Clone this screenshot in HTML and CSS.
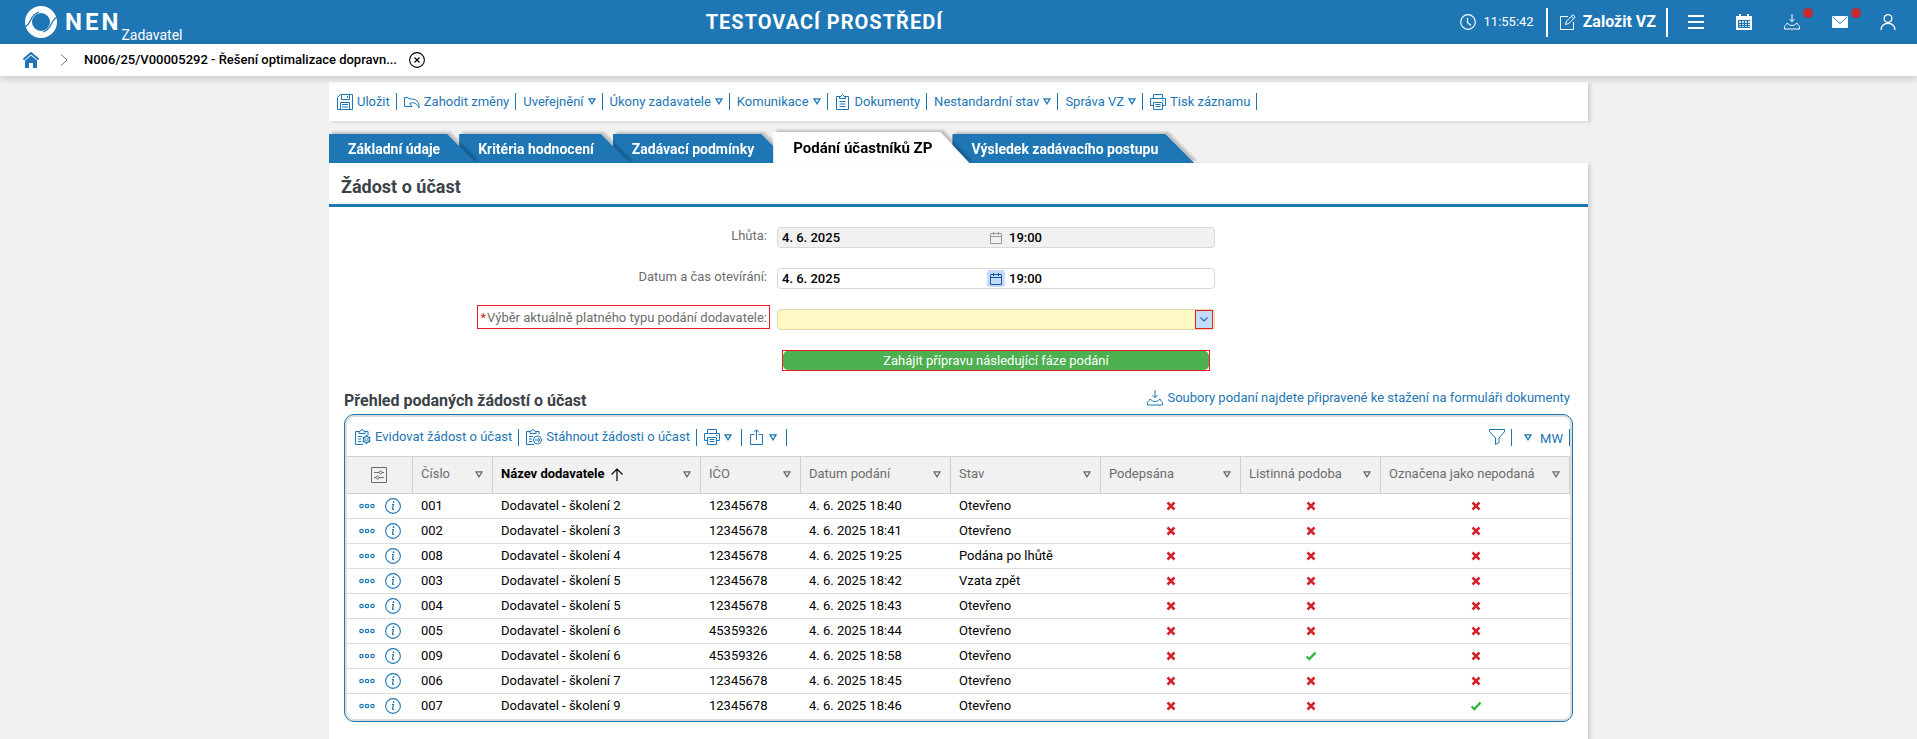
FILE: index.html
```html
<!DOCTYPE html>
<html lang="cs">
<head>
<meta charset="utf-8">
<meta name="viewport" content="width=device-width, initial-scale=1">
<title>NEN – Podání účastníků ZP</title>
<link rel="stylesheet" href="styles.css">
</head>
<body>
<svg class="sprite" aria-hidden="true">
  <symbol id="tri" viewBox="0 0 8 7"><path d="M1 .8h6L4 5.8z" fill="none" stroke="currentColor" stroke-width="1.3"/></symbol>
  <symbol id="print" viewBox="0 0 16 16"><path d="M3.5 4.500V.5h9v4M3.500 11.500h-3v-7h15v7h-3M3.500 8.500h9v7h-9zM5.500 10.500h5M5.500 12.500h5M12 6.500h1.500" fill="none" stroke="currentColor"/></symbol>
  <symbol id="download" viewBox="0 0 16 16"><path d="M8 0v7.500M5.500 5.200 8 7.700 10.500 5.200M4 9.500H2.500c0 2-2 2-2 3v2.500h15v-2.500c0-1-2-1-2-3H12M4 9.500c.5 2.600 7.500 2.600 8 0" fill="none" stroke="currentColor"/></symbol>
  <symbol id="calendar" viewBox="0 0 12 12"><path d="M.5 1.500h11v10H.5zM.5 4.500h11M3.500 0v3M8.500 0v3" fill="none" stroke="currentColor"/></symbol>
  <symbol id="clip" viewBox="0 0 16 16"><path d="M5 2.500H1.500v13h12v-13H10M4.500 4.500v-2H6Q7.500-1.500 9 2.500h1.500v2zM4.500 7.500h6M4.500 10h6M4.500 12.500h6" fill="none" stroke="currentColor"/></symbol>
  <symbol id="clip-gear" viewBox="0 0 16 16"><path d="M4 2.500H.5v13H8M10 2.500h3v4M4 4.500v-2h1Q7-1.500 9 2.500h1v2zM3 7.500h4M3 10h3M3 12.500h3" fill="none" stroke="currentColor"/><circle cx="11.500" cy="10.500" r="3" fill="none" stroke="currentColor" stroke-width="1.200"/><circle cx="11.500" cy="10.500" r="1.200" fill="none" stroke="currentColor" stroke-width=".8"/><path d="M11.500 6v1.500M11.500 13.500V15M7.700 8.200 9 9M14 12l1.300.8M15.300 8.200 14 9M9 12l-1.300.8" stroke="currentColor" stroke-width="1.600"/></symbol>
  <symbol id="clip-arrow" viewBox="0 0 16 16"><path d="M4 2.500H.5v13H8M10 2.500h3v3M4 4.500v-2h1Q7-1.500 9 2.500h1v2zM3 7.500h4M3 10h3M3 12.500h3M9 11h5M12 9l2 2-2 2" fill="none" stroke="currentColor"/><circle cx="11.500" cy="11" r="4" fill="none" stroke="currentColor"/></symbol>
  <symbol id="dots" viewBox="0 0 16 6"><g fill="none" stroke="currentColor" stroke-width="1.200"><circle cx="2.500" cy="3" r="1.700"/><circle cx="8" cy="3" r="1.700"/><circle cx="13.500" cy="3" r="1.700"/></g></symbol>
  <symbol id="info" viewBox="0 0 16 16"><circle cx="8" cy="8" r="7.400" fill="none" stroke="currentColor" stroke-width="1.100"/><path d="M7 6.500h1.300l-.8 4.200q0 1 1.500.4" fill="none" stroke="currentColor" stroke-width="1.200"/><circle cx="8.500" cy="4.200" r=".9" fill="currentColor"/></symbol>
  <symbol id="no" viewBox="0 0 10 10"><path d="m1.500 1.500 7 7m0-7-7 7" stroke="#d2232a" stroke-width="2.500"/></symbol>
  <symbol id="yes" viewBox="0 0 10 10"><path d="m.5 5.500 2.800 2.600L9.500 1.600" fill="none" stroke="#2eb83a" stroke-width="2.300"/></symbol>
</svg>

<header class="topbar">
  <a class="brand" href="#">
    <svg class="brand-mark" viewBox="0 0 32 32" aria-hidden="true">
      <circle cx="16" cy="16" r="12.500" fill="none" stroke="#fff" stroke-width="7"/>
      <path d="M-1 22C2 20 4.500 17 6 13.500 7.500 10 10 7.500 14 6M33 10c-3 2-5.500 5-7 8.500-1.500 3.500-4 6-8 7.500" fill="none" stroke="#1e76b4" stroke-width="1.300"/>
    </svg>
    <span class="brand-name">NEN</span><span class="brand-role">Zadavatel</span>
  </a>
  <strong class="env">TESTOVACÍ PROSTŘEDÍ</strong>
  <div class="top-actions">
    <span class="clock"><svg class="i16" viewBox="0 0 16 16" aria-hidden="true"><circle cx="8" cy="8" r="7.300" fill="none" stroke="currentColor" stroke-width="1.200"/><path d="M7.500 4v4.500l3.500 3" fill="none" stroke="currentColor" stroke-width="1.200"/></svg>11:55:42</span>
    <button class="create" type="button"><svg class="i16" viewBox="0 0 16 16" aria-hidden="true"><path d="M8 2.500H.5v13h13V8M5.500 10.500l1-3.500L13 .8l2.200 2.200L8.800 9.500zM11.500 2.200l2.200 2.300" fill="none" stroke="currentColor"/></svg>Založit VZ</button>
    <nav class="top-icons" aria-label="Nástroje">
      <button type="button" aria-label="Menu"><svg class="i16" viewBox="0 0 16 16"><path d="M0 2h16M0 8h16M0 14h16" stroke="currentColor" stroke-width="2"/></svg></button>
      <button type="button" aria-label="Kalendář"><svg class="i16" viewBox="0 0 16 16"><path d="M0 2h3V0h2v2h6V0h2v2h3v14H0zM2 6v8h12V6z" fill="currentColor" fill-rule="evenodd"/><path d="M3 7h2v2H3zm3 0h2v2H6zm3 0h2v2H9zm3 0h2v2h-2zM3 10h2v1H3zm3 0h2v1H6zm3 0h2v1H9zm3 0h2v1h-2zM3 12h2v1H3zm3 0h2v1H6zm3 0h2v1H9zm3 0h2v1h-2z" fill="currentColor" opacity=".75"/></svg></button>
      <button type="button" aria-label="Stahování"><svg class="i16"><use href="#download"/></svg><i class="badge"></i></button>
      <button type="button" aria-label="Zprávy"><svg class="i16" viewBox="0 0 16 16"><rect y="2" width="16" height="12" rx="1" fill="currentColor"/><path d="m1 3 7 6.500L15 3" fill="none" stroke="#1e76b4"/></svg><i class="badge"></i></button>
      <button type="button" aria-label="Uživatel"><svg class="i16" viewBox="0 0 16 16"><circle cx="8" cy="4.500" r="3.900" fill="none" stroke="currentColor" stroke-width="1.300"/><path d="M1 16c0-9 14-9 14 0" fill="none" stroke="currentColor" stroke-width="1.300"/></svg></button>
    </nav>
  </div>
</header>

<nav class="crumbs" aria-label="Navigace">
  <a href="#" aria-label="Domů"><svg class="i16" viewBox="0 0 16 16"><path d="M.5 7.500 8 1l7.500 6.500" fill="none" stroke="#1e76b4" stroke-width="2"/><path d="M2 8.500 8 3.500l6 5V16h-4v-5H6v5H2z" fill="#1e76b4"/></svg></a>
  <svg class="crumb-sep" viewBox="0 0 8 12" aria-hidden="true"><path d="m1 .5 6 5.500-6 5.500" fill="none" stroke="#777"/></svg>
  <a class="crumb-title" href="#">N006/25/V00005292 - Řešení optimalizace dopravn...</a>
  <button type="button" aria-label="Zavřít"><svg class="i16" viewBox="0 0 16 16"><circle cx="8" cy="8" r="7.400" fill="none" stroke="#000" stroke-width="1.100"/><path d="m5.500 5.500 5 5m0-5-5 5" stroke="#000" stroke-width="1.200"/></svg></button>
</nav>

<main class="page">
  <div class="toolbar card" role="toolbar" aria-label="Záznam">
    <button type="button"><svg class="i16" viewBox="0 0 16 16"><path d="M3.500.5h12v15H.5v-12zM4.500.5v5h8v-5M10.500 2v2M3.500 15.500v-7h9v7M5 10.500h6M5 13h6" fill="none" stroke="currentColor"/></svg>Uložit</button>
    <button type="button"><svg class="i16" viewBox="0 0 16 16"><path d="M6.500 5 4.500 4.500 4 3.500H.5v9h7.500L5.500 9.500c4-2 7.500 0 9.500 4.500.8-6-3-9.500-8.500-9z" fill="none" stroke="currentColor"/></svg>Zahodit změny</button>
    <button type="button">Uveřejnění<svg class="tri"><use href="#tri"/></svg></button>
    <button type="button">Úkony zadavatele<svg class="tri"><use href="#tri"/></svg></button>
    <button type="button">Komunikace<svg class="tri"><use href="#tri"/></svg></button>
    <button type="button"><svg class="i16"><use href="#clip"/></svg>Dokumenty</button>
    <button type="button">Nestandardní stav<svg class="tri"><use href="#tri"/></svg></button>
    <button type="button">Správa VZ<svg class="tri"><use href="#tri"/></svg></button>
    <button type="button"><svg class="i16"><use href="#print"/></svg>Tisk záznamu</button>
  </div>

  <nav class="tabs" aria-label="Záložky">
    <a class="tab" href="#"><span>Základní údaje</span></a>
    <a class="tab" href="#"><span>Kritéria hodnocení</span></a>
    <a class="tab" href="#"><span>Zadávací podmínky</span></a>
    <a class="tab active" href="#" aria-current="page"><span>Podání účastníků ZP</span></a>
    <a class="tab" href="#"><span>Výsledek zadávacího postupu</span></a>
  </nav>

  <section class="panel card">
    <h1>Žádost o účast</h1>
    <form class="form">
      <label for="deadline">Lhůta:</label>
      <div class="field datetime readonly">
        <input id="deadline" value="4. 6. 2025" readonly>
        <button type="button" aria-label="Kalendář" disabled><svg class="i12"><use href="#calendar"/></svg></button>
        <input aria-label="Lhůta, čas" value="19:00" readonly>
      </div>
      <label for="opening">Datum a čas otevírání:</label>
      <div class="field datetime">
        <input id="opening" value="4. 6. 2025">
        <button type="button" aria-label="Kalendář"><svg class="i12"><use href="#calendar"/></svg></button>
        <input aria-label="Čas otevírání" value="19:00">
      </div>
      <label class="marked" for="type"><b>*</b>Výběr aktuálně platného typu podání dodavatele:</label>
      <div class="field choice">
        <select id="type"><option></option></select>
        <span class="choice-arrow"><svg viewBox="0 0 8 5"><path d="m.5.5 3.500 3.500L7.500.5" fill="none" stroke="#1e6db8" stroke-width="1.200"/></svg></span>
      </div>
      <div class="submit-wrap"><button class="submit" type="button">Zahájit přípravu následující fáze podání</button></div>
    </form>

    <div class="list-head">
      <h2>Přehled podaných žádostí o účast</h2>
      <a href="#"><svg class="i16"><use href="#download"/></svg>Soubory podaní najdete připravené ke stažení na formuláři dokumenty</a>
    </div>

    <div class="grid-box">
      <div class="grid-tools">
        <button type="button"><svg class="i16"><use href="#clip-gear"/></svg>Evidovat žádost o účast</button>
        <button type="button"><svg class="i16"><use href="#clip-arrow"/></svg>Stáhnout žádosti o účast</button>
        <button class="compact" type="button" aria-label="Tisk"><svg class="i16"><use href="#print"/></svg><svg class="tri"><use href="#tri"/></svg></button>
        <button class="compact" type="button" aria-label="Export"><svg class="i16" viewBox="0 0 16 16"><path d="M5.500 5.500h-4v10h12v-10h-4M7.500 11V.8M5 3.300 7.500.8 10 3.300" fill="none" stroke="currentColor"/></svg><svg class="tri"><use href="#tri"/></svg></button>
        <button class="push" type="button" aria-label="Filtr"><svg class="i16" viewBox="0 0 16 16"><path d="M.5.5h15v2.200L10 9v4.500L6.500 15.500V9L.5 2.700z" fill="none" stroke="currentColor"/></svg></button>
        <button class="view" type="button"><svg class="tri"><use href="#tri"/></svg><span>MW</span></button>
      </div>
      <table>
        <colgroup><col class="w66"><col class="w80"><col class="w208"><col class="w100"><col class="w150"><col class="w150"><col class="w140"><col class="w140"><col></colgroup>
        <thead>
          <tr>
            <th class="settings"><button type="button" aria-label="Nastavení sloupců"><svg class="i16" viewBox="0 0 16 16"><path d="M.5.500h15v15H.5zM3 5.500h5M11 5.500h2M3 10.500h2M8 10.500h5" fill="none" stroke="currentColor"/><circle cx="9.500" cy="5.500" r="1.500" fill="none" stroke="currentColor"/><circle cx="6.500" cy="10.500" r="1.500" fill="none" stroke="currentColor"/></svg></button></th>
            <th><div>Číslo<svg class="tri"><use href="#tri"/></svg></div></th>
            <th class="sorted"><div>Název dodavatele<svg class="arrow" viewBox="0 0 12 13"><path d="M6 13V1M.5 6.500 6 1l5.500 5.500" fill="none" stroke="#000" stroke-width="1.200"/></svg><svg class="tri"><use href="#tri"/></svg></div></th>
            <th><div>IČO<svg class="tri"><use href="#tri"/></svg></div></th>
            <th><div>Datum podání<svg class="tri"><use href="#tri"/></svg></div></th>
            <th><div>Stav<svg class="tri"><use href="#tri"/></svg></div></th>
            <th><div>Podepsána<svg class="tri"><use href="#tri"/></svg></div></th>
            <th><div>Listinná podoba<svg class="tri"><use href="#tri"/></svg></div></th>
            <th><div>Označena jako nepodaná<svg class="tri"><use href="#tri"/></svg></div></th>
          </tr>
        </thead>
        <tbody id="rows"></tbody>
      </table>
    </div>
  </section>
</main>
<script src="rows.js"></script>
</body>
</html>
```
FILE: rows.js
```javascript
const submissions = [
  ["001", "Dodavatel - školení 2", "12345678", "4. 6. 2025 18:40", "Otevřeno", 0, 0, 0],
  ["002", "Dodavatel - školení 3", "12345678", "4. 6. 2025 18:41", "Otevřeno", 0, 0, 0],
  ["008", "Dodavatel - školení 4", "12345678", "4. 6. 2025 19:25", "Podána po lhůtě", 0, 0, 0],
  ["003", "Dodavatel - školení 5", "12345678", "4. 6. 2025 18:42", "Vzata zpět", 0, 0, 0],
  ["004", "Dodavatel - školení 5", "12345678", "4. 6. 2025 18:43", "Otevřeno", 0, 0, 0],
  ["005", "Dodavatel - školení 6", "45359326", "4. 6. 2025 18:44", "Otevřeno", 0, 0, 0],
  ["009", "Dodavatel - školení 6", "45359326", "4. 6. 2025 18:58", "Otevřeno", 0, 1, 0],
  ["006", "Dodavatel - školení 7", "12345678", "4. 6. 2025 18:45", "Otevřeno", 0, 0, 0],
  ["007", "Dodavatel - školení 9", "12345678", "4. 6. 2025 18:46", "Otevřeno", 0, 0, 1],
];

const actions =
  '<td><div class="row-actions">' +
  '<button type="button" aria-label="Akce"><svg class="dots"><use href="#dots"/></svg></button>' +
  '<button type="button" aria-label="Detail"><svg class="i16"><use href="#info"/></svg></button>' +
  "</div></td>";

const flag = (on) =>
  `<td class="flag"><svg role="img" aria-label="${on ? "Ano" : "Ne"}"><use href="#${on ? "yes" : "no"}"/></svg></td>`;

document.getElementById("rows").innerHTML = submissions
  .map((s) => "<tr>" + actions + s.slice(0, 5).map((v) => `<td>${v}</td>`).join("") + s.slice(5).map(flag).join("") + "</tr>")
  .join("");
```
FILE: styles.css
```css
:root {
  --blue: #1e76b4;
  --line: #dcdedd;
  --bg: #f1f1f1;
  --red: #ed1c24;
}
* { box-sizing: border-box; }
body {
  margin: 0;
  background: var(--bg);
  color: #000;
  font: 13px/16px Roboto, "Open Sans", sans-serif;
}
button, input, select { font: inherit; color: inherit; }
button { display: flex; align-items: center; border: 0; padding: 0; background: none; }
a { color: var(--blue); text-decoration: none; }
svg { display: block; flex: none; }
.sprite { position: absolute; width: 0; height: 0; }
.i16 { width: 16px; height: 16px; }
.i12 { width: 12px; height: 12px; }
.tri { width: 8px; height: 7px; }

.topbar {
  display: grid;
  grid-template-columns: 17fr auto 24fr;
  height: 44px;
  align-items: center;
  padding: 0 13px 0 25px;
  background: var(--blue);
  color: #fff;
}
.brand { display: flex; align-items: center; height: 44px; color: #fff; }
.brand-mark { width: 32px; height: 32px; }
.brand-name { margin-left: 8px; font-size: 24px; font-weight: 700; letter-spacing: 3px; }
.brand-role { align-self: flex-end; padding-bottom: 1px; font-size: 14px; }
.env { font-size: 20px; font-weight: 700; letter-spacing: 1px; }
.top-actions { display: flex; justify-content: flex-end; align-items: center; }
.clock { display: flex; align-items: center; gap: 8px; padding-right: 12px; }
.create { gap: 7px; height: 29px; padding: 0 10px 0 12px; border: solid #fff; border-width: 0 2px; font-size: 16px; font-weight: 700; }
.top-icons { display: flex; margin-left: 4px; margin-right: -8px; }
.top-icons button { position: relative; justify-content: center; width: 48px; height: 44px; }
.badge { position: absolute; top: 8px; right: 3px; width: 10px; height: 10px; border-radius: 50%; background: #c92a2d; }

.crumbs {
  position: relative;
  z-index: 10;
  display: flex;
  align-items: center;
  height: 32px;
  padding: 0 23px;
  background: #fff;
  box-shadow: 0 2px 8px rgba(0, 0, 0, .2);
}
.crumb-sep { width: 8px; height: 12px; margin: 0 16px 0 21px; }
.crumb-title { margin-right: 12px; color: #000; font-weight: 500; }

.page { max-width: 1259px; margin: 6px auto 0; }
.card { background: #fff; box-shadow: 3px 1px 3px rgba(0, 0, 0, .12); }
.toolbar { display: flex; align-items: center; height: 39px; padding-left: 1px; }
.toolbar button, .grid-tools button {
  gap: 4px;
  height: 17px;
  padding: 0 6px 0 7px;
  border-right: 1px solid var(--blue);
  color: var(--blue);
  white-space: nowrap;
}

.tabs { display: flex; align-items: flex-end; height: 42px; padding-top: 10px; }
.tab {
  position: relative;
  z-index: 5;
  height: 29px;
  padding: 0 19px;
  color: #fff;
  font-size: 14px;
  font-weight: 700;
  line-height: 31px;
  white-space: nowrap;
  filter: drop-shadow(3px -2px 1px rgba(0, 0, 0, .2));
}
.tab::before {
  content: "";
  position: absolute;
  inset: 0 -17px 0 0;
  background: var(--blue);
  clip-path: polygon(0 0, calc(100% - 29px) 0, 100% 100%, 0 100%);
}
.tab span { position: relative; }
.tab:nth-child(2) { z-index: 4; }
.tab:nth-child(3) { z-index: 3; }
.tab:nth-child(5) { z-index: 1; }
.tab.active { z-index: 6; height: 31px; padding: 0 20px; color: #000; font-size: 15px; line-height: 32px; }
.tab.active::before { background: #fff; }

.panel { position: relative; z-index: 7; padding-bottom: 24px; }
h1 { margin: 0; padding: 12px 12px 5px; border-bottom: 3px solid var(--blue); color: #3b4248; font-size: 18px; line-height: 24px; font-weight: 700; }

.form {
  display: grid;
  grid-template-columns: 441fr 438fr 373fr;
  grid-auto-rows: 21px;
  row-gap: 20px;
  padding-top: 20px;
  padding-left: 7px;
}
.form > label { grid-column: 1; justify-self: end; align-self: start; height: 24px; margin: -4px 7px 0 0; padding: 4px 2px 2px; border: 1px solid transparent; color: #6d6d6d; white-space: nowrap; }
.form > label.marked { border-color: var(--red); }
.form > label b { padding-right: 1px; color: #d2232a; font-weight: 400; }
.field { grid-column: 2; display: flex; align-items: center; border: 1px solid #d9d9d9; border-radius: 4px; background: #fff; }
.field input { flex: 1; width: 0; height: 19px; padding: 0 4px; border: 0; background: none; font-weight: 500; outline: 0; }
.datetime button { justify-content: center; width: 18px; height: 17px; border-radius: 3px; background: #c3dbf7; color: #1a56a5; }
.readonly { background: var(--bg); }
.readonly button { background: none; color: #999; }
.choice { position: relative; border-color: #dcd8b4; background: #fff8c5; }
.choice select { width: 100%; height: 19px; border: 0; background: none; appearance: none; outline: 0; }
.choice-arrow { position: absolute; top: 0; right: 1px; display: flex; align-items: center; justify-content: center; width: 18px; height: 19px; border: 1px solid var(--red); background: #c3dbf7; pointer-events: none; }
.choice-arrow svg { width: 8px; height: 5px; }
.submit-wrap { grid-column: 2; margin: 0 5px; border: 1px solid var(--red); }
.submit { width: 100%; height: 19px; justify-content: center; border-radius: 5px; background: #4caf50; color: #fff; }

.list-head { display: flex; justify-content: space-between; padding: 18px 18px 3px 15px; }
.list-head h2 { margin: 0; padding-top: 3px; color: #3b4248; font-size: 16px; line-height: 18px; font-weight: 700; height: 22px; }
.list-head a { display: flex; align-items: center; gap: 4px; height: 18px; }

.grid-box { margin: 0 15px; padding: 2px 2px 3px; border: 1px solid var(--blue); border-radius: 10px; background: #fff; box-shadow: inset 0 0 0 2px var(--line); overflow: hidden; }
.grid-tools { display: flex; align-items: center; height: 39px; padding: 1px 0 0 1px; }
.grid-tools .compact { padding-right: 9px; }
.grid-tools .push { margin-left: auto; }
.grid-tools .view { gap: 8px; padding-left: 12px; }
.view span { padding-top: 3px; }

table { width: 100%; border-collapse: separate; border-spacing: 0; table-layout: fixed; }
.w66 { width: 66px; }
.w80 { width: 80px; }
.w100 { width: 100px; }
.w140 { width: 140px; }
.w150 { width: 150px; }
.w208 { width: 208px; }
th { height: 38px; padding: 0 9px 0 8px; border: solid #d0d0d0; border-width: 1px 1px 1px 0; background: var(--bg); color: #6d6d6d; font-weight: 400; text-align: left; white-space: nowrap; }
th div { display: flex; align-items: center; height: 32px; padding-bottom: 2px; }
th .tri { margin-left: auto; }
th .arrow { width: 12px; height: 13px; margin-left: 6px; }
th.sorted { color: #000; font-weight: 700; }
th.sorted .tri { color: #6d6d6d; }
.settings button { margin: 0 auto; }
td { height: 25px; padding: 0 8px; border-bottom: 1px solid var(--line); white-space: nowrap; }
tbody tr:last-child td { height: 24px; border-bottom: 0; }
.row-actions { display: flex; align-items: center; gap: 10px; padding-left: 4px; }
.row-actions button { color: var(--blue); }
.dots { width: 16px; height: 6px; }
.flag svg { width: 10px; height: 10px; margin: 0 auto 1px; }
```
